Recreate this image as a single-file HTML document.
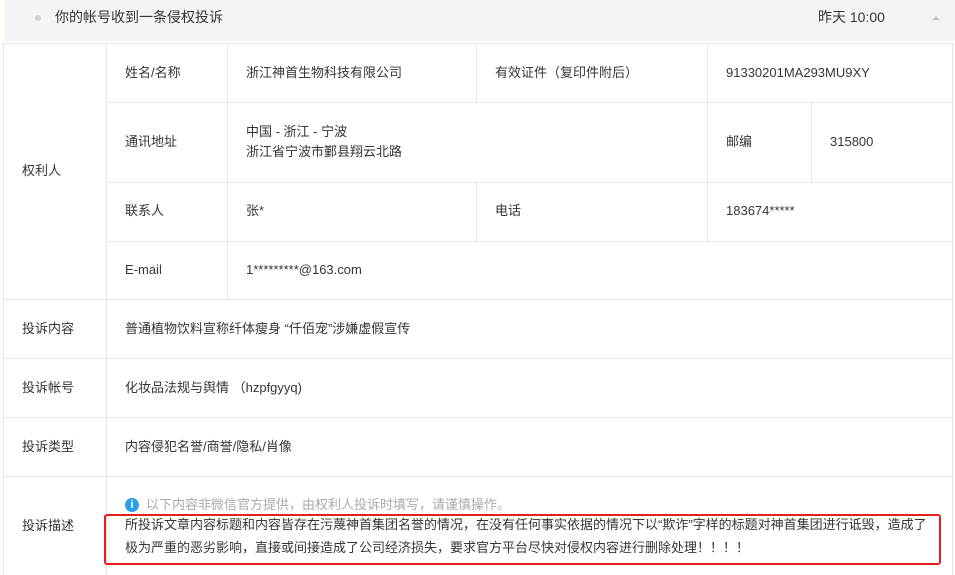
<html><head><style>
body{margin:0;width:955px;height:575px;overflow:hidden;background:#fff;font-family:"Liberation Sans","Noto Sans CJK SC",sans-serif;font-size:13px;color:#353535;position:relative}
.a{position:absolute}
.h{left:5px;top:0;width:950px;height:41px;background:#f3f4f8}
.l{position:absolute;background:#e7e7eb}
.t{position:absolute;white-space:nowrap;line-height:18px}
</style></head><body>
<div class="a h"></div>
<div class="a" style="left:35px;top:15px;width:6px;height:6px;border-radius:50%;background:#d2d2d6"></div>
<div class="t" style="left:55px;top:8px;font-size:14px">你的帐号收到一条侵权投诉</div>
<div class="t" style="left:818px;top:8px;font-size:14px">昨天 10:00</div>
<div class="a" style="left:932px;top:16px;width:0;height:0;border-left:4px solid transparent;border-right:4px solid transparent;border-bottom:4px solid #c7c7cc"></div>
<div class="l" style="left:3px;top:43px;width:950px;height:1px"></div>
<div class="l" style="left:106px;top:102px;width:847px;height:1px"></div>
<div class="l" style="left:106px;top:182px;width:847px;height:1px"></div>
<div class="l" style="left:106px;top:241px;width:847px;height:1px"></div>
<div class="l" style="left:3px;top:299px;width:950px;height:1px"></div>
<div class="l" style="left:3px;top:358px;width:950px;height:1px"></div>
<div class="l" style="left:3px;top:417px;width:950px;height:1px"></div>
<div class="l" style="left:3px;top:476px;width:950px;height:1px"></div>
<div class="l" style="left:3px;top:43px;width:1px;height:532px"></div>
<div class="l" style="left:106px;top:43px;width:1px;height:532px"></div>
<div class="l" style="left:952px;top:43px;width:1px;height:532px"></div>
<div class="l" style="left:227px;top:43px;width:1px;height:256px"></div>
<div class="l" style="left:476px;top:43px;width:1px;height:59px"></div>
<div class="l" style="left:476px;top:182px;width:1px;height:59px"></div>
<div class="l" style="left:707px;top:43px;width:1px;height:198px"></div>
<div class="l" style="left:811px;top:102px;width:1px;height:80px"></div>
<div class="t" style="left:22px;top:162px">权利人</div>
<div class="t" style="left:125px;top:64px">姓名/名称</div>
<div class="t" style="left:246px;top:64px">浙江神首生物科技有限公司</div>
<div class="t" style="left:495px;top:64px">有效证件（复印件附后）</div>
<div class="t" style="left:726px;top:64px">91330201MA293MU9XY</div>
<div class="t" style="left:125px;top:133px">通讯地址</div>
<div class="t" style="left:246px;top:123px">中国 - 浙江 - 宁波</div>
<div class="t" style="left:246px;top:143px">浙江省宁波市鄞县翔云北路</div>
<div class="t" style="left:726px;top:133px">邮编</div>
<div class="t" style="left:830px;top:133px">315800</div>
<div class="t" style="left:125px;top:202px">联系人</div>
<div class="t" style="left:246px;top:202px">张*</div>
<div class="t" style="left:495px;top:202px">电话</div>
<div class="t" style="left:726px;top:202px">183674*****</div>
<div class="t" style="left:125px;top:261px">E-mail</div>
<div class="t" style="left:246px;top:261px">1*********@163.com</div>
<div class="t" style="left:22px;top:320px">投诉内容</div>
<div class="t" style="left:125px;top:320px">普通植物饮料宣称纤体瘦身 “仟佰宠”涉嫌虚假宣传</div>
<div class="t" style="left:22px;top:379px">投诉帐号</div>
<div class="t" style="left:125px;top:379px">化妆品法规与舆情 （hzpfgyyq)</div>
<div class="t" style="left:22px;top:438px">投诉类型</div>
<div class="t" style="left:125px;top:438px">内容侵犯名誉/商誉/隐私/肖像</div>
<div class="t" style="left:22px;top:517px">投诉描述</div>
<div class="a" style="left:125px;top:498px;width:14px;height:14px;border-radius:50%;background:#2d9ee8;color:#fff;font-size:11px;font-weight:bold;text-align:center;line-height:14px">i</div>
<div class="t" style="left:146px;top:496px;color:#aaa">以下内容非微信官方提供，由权利人投诉时填写，请谨慎操作。</div>
<div class="a" style="left:104px;top:514px;width:833px;height:47px;border:2px solid #e8201c;border-radius:3px"></div>
<div class="t" style="left:125px;top:516px;font-size:13px">所投诉文章内容标题和内容皆存在污蔑神首集团名誉的情况，在没有任何事实依据的情况下以“欺诈”字样的标题对神首集团进行诋毁，造成了</div>
<div class="t" style="left:125px;top:539px;font-size:13px">极为严重的恶劣影响，直接或间接造成了公司经济损失，要求官方平台尽快对侵权内容进行删除处理！！！！</div>
</body></html>
